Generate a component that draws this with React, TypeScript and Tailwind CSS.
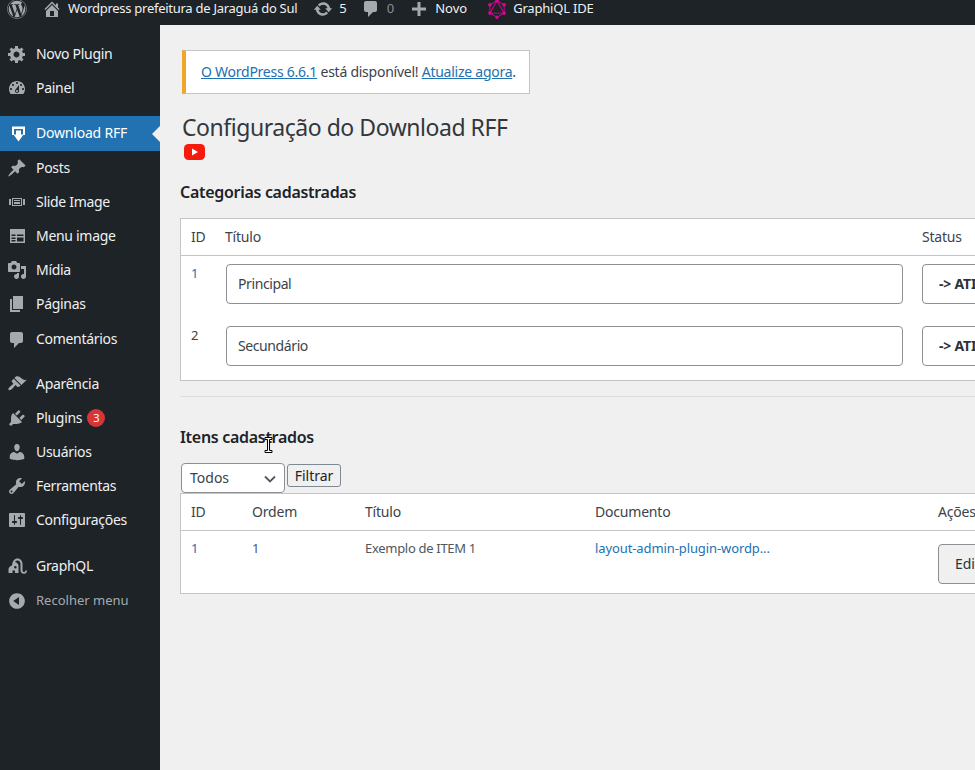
import { FaWordpress } from "react-icons/fa";
import { SiGraphql } from "react-icons/si";

const paths = {
  gear: "M18 12h-2.18c-.17.7-.44 1.35-.81 1.93l1.54 1.54-2.1 2.1-1.54-1.54c-.58.36-1.23.63-1.91.79V19H8v-2.18c-.68-.16-1.33-.43-1.91-.79l-1.54 1.54-2.12-2.12 1.54-1.54c-.36-.58-.63-1.23-.79-1.91H1V9.03h2.17c.16-.7.44-1.35.8-1.94L2.43 5.55l2.1-2.1 1.54 1.54c.58-.37 1.24-.64 1.93-.81V2h3v2.18c.68.16 1.33.43 1.91.79l1.54-1.54 2.12 2.12-1.54 1.54c.36.59.64 1.24.8 1.94H18V12zm-8.5 1.5c1.66 0 3-1.34 3-3s-1.34-3-3-3-3 1.34-3 3 1.34 3 3 3z",
  dashboard: "M3.76 16h12.48c1.1-1.37 1.76-3.11 1.76-5 0-4.42-3.58-8-8-8s-8 3.58-8 8c0 1.89.66 3.63 1.76 5zM10 4c.55 0 1 .45 1 1s-.45 1-1 1-1-.45-1-1 .45-1 1-1zM6 6c.55 0 1 .45 1 1s-.45 1-1 1-1-.45-1-1 .45-1 1-1zm8 0c.55 0 1 .45 1 1s-.45 1-1 1-1-.45-1-1 .45-1 1-1zm-5.37 5.55L12 7v6c0 1.1-.9 2-2 2s-2-.9-2-2c0-.57.24-1.08.63-1.45zM4 10c.55 0 1 .45 1 1s-.45 1-1 1-1-.45-1-1 .45-1 1-1zm12 0c.55 0 1 .45 1 1s-.45 1-1 1-1-.45-1-1 .45-1 1-1zm-5 3c0-.55-.45-1-1-1s-1 .45-1 1 .45 1 1 1 1-.45 1-1z",
  pin: "M10.44 3.02l1.82-1.82 6.36 6.35-1.83 1.82c-1.05-.68-2.48-.57-3.41.36l-.75.75c-.92.93-1.04 2.35-.35 3.41l-1.83 1.82-2.41-2.41-2.8 2.79c-.42.42-3.38 2.71-3.8 2.29s1.86-3.39 2.28-3.81l2.79-2.79L4.1 9.36l1.83-1.82c1.05.69 2.48.57 3.4-.36l.75-.75c.93-.92 1.05-2.35.36-3.41z",
  slides: "M5 14V6h10v8H5zm-3-1V7h2v6H2zm4-6v6h8V7H6zm10 0h2v6h-2V7zm-3 2V8H7v1h6zm0 3v-2H7v2h6z",
  table: "M3 3h15v14H3zM4.500 8.500v1.500h4V8.500zM10 8.500v1.500h6.500V8.500zM4.500 11.500v1.500h4v-1.500zM10 11.500v4h6.500v-4zM4.500 14v1.500h4V14z",
  media: "M13 11V4c0-.55-.45-1-1-1h-1.67L9 1H5L3.67 3H2c-.55 0-1 .45-1 1v7c0 .55.45 1 1 1h10c.55 0 1-.45 1-1zM7 4.5c1.38 0 2.5 1.12 2.5 2.5S8.38 9.5 7 9.5 4.5 8.38 4.5 7 5.62 4.5 7 4.5zM14 6h5v10.5c0 1.38-1.12 2.5-2.5 2.5S14 17.88 14 16.5s1.12-2.5 2.5-2.5c.17 0 .34.02.5.05V9h-3V6zm-4 8.05V13h2v3.5c0 1.38-1.12 2.5-2.5 2.5S7 17.88 7 16.5 8.12 14 9.5 14c.17 0 .34.02.5.05z",
  page: "M6 15V2h10v13H6zm-1 1h8v2H3V5h2v11z",
  comment: "M5 2h9c1.1 0 2 .9 2 2v7c0 1.1-.9 2-2 2h-2l-5 5v-5H5c-1.1 0-2-.9-2-2V4c0-1.1.9-2 2-2z",
  brush: "M14.48 11.06L7.41 3.99l1.5-1.5c.5-.56 2.3-.47 3.51.32 1.21.8 1.43 1.28 2.91 2.1 1.18.64 2.45 1.26 4.45.85zm-.71.71L6.7 4.7 4.93 6.47c-.39.39-.39 1.02 0 1.41l1.06 1.06c.39.39.39 1.03 0 1.42-.6.6-1.43 1.11-2.21 1.69-.35.26-.7.53-1.01.84C1.43 13.71.96 15.12 1.75 15.89c.8.79 2.2.32 3.56-1.03.31-.31.58-.66.84-1.01.58-.78 1.09-1.61 1.69-2.21.39-.39 1.03-.39 1.42 0l1.06 1.06c.39.39 1.02.39 1.41 0z",
  plugin: "M13.11 4.36L9.87 7.6 8 5.73l3.24-3.24c.35-.34 1.05-.2 1.56.32.52.51.66 1.21.31 1.55zm-8 1.77l.91-1.12 9.01 9.01-1.19.84c-.71.71-2.63 1.16-3.82 1.16H6.14L4.9 17.26c-.59.59-1.54.59-2.12 0-.59-.58-.59-1.53 0-2.12l1.24-1.24v-3.88c0-1.13.4-3.19 1.09-3.89zm7.26 3.97l3.24-3.24c.34-.35 1.04-.21 1.55.31.52.51.66 1.21.31 1.55l-3.24 3.25z",
  user: "M10 9.25c-2.27 0-2.73-3.44-2.73-3.44C7 4.02 7.82 2 9.97 2c2.16 0 2.98 2.02 2.71 3.81 0 0-.41 3.44-2.68 3.44zm0 2.57L12.72 10c2.39 0 4.52 2.33 4.52 4.53v2.49s-3.65 1.13-7.24 1.13c-3.65 0-7.24-1.13-7.24-1.13v-2.49c0-2.25 1.94-4.48 4.47-4.48z",
  wrench: "M16.68 9.77c-1.34 1.34-3.3 1.67-4.95.99l-5.41 6.52c-.99.99-2.59.99-3.58 0s-.99-2.59 0-3.57l6.52-5.42c-.68-1.65-.35-3.61.99-4.95 1.28-1.28 3.12-1.62 4.72-1.06l-2.89 2.89 2.82 2.82 2.86-2.87c.53 1.58.18 3.39-1.08 4.65zM3.81 16.21c.4.39 1.04.39 1.43 0 .4-.4.4-1.04 0-1.43-.39-.4-1.03-.4-1.43 0-.39.39-.39 1.03 0 1.43z",
  settings: "M18 16V4c0-.55-.45-1-1-1H3c-.55 0-1 .45-1 1v12c0 .55.45 1 1 1h14c.55 0 1-.45 1-1zM8 11h1c.55 0 1 .45 1 1s-.45 1-1 1H8v1.5c0 .28-.22.5-.5.5s-.5-.22-.5-.5V13H6c-.55 0-1-.45-1-1s.45-1 1-1h1V5.5c0-.28.22-.5.5-.5s.5.22.5.5V11zm5-2h-1c-.55 0-1-.45-1-1s.45-1 1-1h1V5.5c0-.28.22-.5.5-.5s.5.22.5.5V7h1c.55 0 1 .45 1 1s-.45 1-1 1h-1v5.5c0 .28-.22.5-.5.5s-.5-.22-.5-.5V9z",
  collapse: "M10 2.16c4.33 0 7.84 3.51 7.84 7.84s-3.51 7.84-7.84 7.84S2.16 14.33 2.16 10 5.71 2.16 10 2.16zm2 11.72V6.12L6.18 9.97z",
  home: "M16 8.5l1.53 1.53-1.06 1.06L10 4.62l-6.47 6.47-1.06-1.06L10 2.5l4 4v-2h2v4zm-6-2.46l6 5.99V18H4v-5.97zM12 17v-5H8v5h4z",
  update: "M10.2 3.28c3.53 0 6.43 2.61 6.92 6h2.08l-3.5 4-3.5-4h2.32c-.45-1.97-2.21-3.45-4.32-3.45-1.45 0-2.73.71-3.54 1.78L4.95 5.66C6.23 4.2 8.11 3.28 10.2 3.28zm-.4 13.44c-3.52 0-6.43-2.61-6.92-6H.8l3.5-4c1.17 1.33 2.33 2.67 3.5 4H5.48c.45 1.97 2.21 3.45 4.32 3.45 1.45 0 2.73-.71 3.54-1.78l1.71 1.95c-1.28 1.46-3.15 2.38-5.25 2.38z",
  plus: "M17 8.5v3h-5.5V17h-3v-5.5H3v-3h5.5V3h3v5.5z",
  download: "M5 2.500h13v8.500h-2V5H7v6H5zM9 6.500h5V10.500h2.500l-5 7-5-7H9z",
  elephant: "M1.500 17V13.500C1.500 11.500 3 10 5 9.500 5.500 5 7.500 2.500 10.500 2.500 13.500 2.500 15.500 5 15.500 8V14C15.500 15.500 16.200 16 17 16 17.800 16 18.300 15.500 18.300 14.500H20C20 16.500 18.800 17.800 17 17.800 15 17.800 13.500 16.500 13.500 14V8C13.500 6 12.300 4.500 10.500 4.500 9.500 4.500 8.700 5 8 6 10 6.500 11.500 8 11.500 10V17H8V14.500H5.500V17ZM7 11.200a1.300 1.300 0 1 0 2.600 0 1.300 1.300 0 1 0-2.600 0Z",
};

function Dash({ d, className = "", evenOdd = false }: { d: string; className?: string; evenOdd?: boolean }) {
  return (
    <svg viewBox="0 0 20 20" className={`h-5 w-5 fill-current ${className}`}>
      <path d={d} fillRule={evenOdd ? "evenodd" : "nonzero"} />
    </svg>
  );
}

function Item({ d, label, children, h = "h-[34px]", evenOdd }: { d: string; label: string; children?: React.ReactNode; h?: string; evenOdd?: boolean }) {
  return (
    <div className={`flex items-center ${h} pl-[7px] text-[14px] tracking-[-0.3px] text-[#f0f0f1]`}>
      <span className="flex w-[29px] shrink-0 text-[#a7aaad]"><Dash d={d} evenOdd={evenOdd} /></span>
      <span className="pb-[2px]">{label}</span>
      {children}
    </div>
  );
}

function Sidebar() {
  return (
    <aside className="w-40 shrink-0 bg-[#1d2327] pt-3">
      <Item d={paths.gear} label="Novo Plugin" />
      <Item d={paths.dashboard} label="Painel" />
      <div className="relative mt-[11px] flex h-[35px] items-center bg-[#2271b1] pl-[7px] text-[14px] tracking-[-0.2px] text-white">
        <span className="flex w-[29px] shrink-0"><Dash d={paths.download} /></span>
        <span className="pb-[2px]">Download RFF</span>
        <span className="absolute right-0 top-[10px] h-0 w-0 border-y-[8px] border-r-[8px] border-y-transparent border-r-[#f0f0f1]" />
      </div>
      <Item d={paths.pin} label="Posts" />
      <Item d={paths.slides} label="Slide Image" />
      <Item d={paths.table} label="Menu image" evenOdd />
      <Item d={paths.media} label="Mídia" />
      <Item d={paths.page} label="Páginas" />
      <Item d={paths.comment} label="Comentários" h="h-[35px] pt-[2px]" />
      <div className="h-[11px]" />
      <Item d={paths.brush} label="Aparência" />
      <Item d={paths.plugin} label="Plugins">
        <span className="ml-[5px] flex h-[18px] w-[18px] items-center justify-center rounded-full bg-[#d63638] text-[11px] text-white">3</span>
      </Item>
      <Item d={paths.user} label="Usuários" />
      <Item d={paths.wrench} label="Ferramentas" />
      <Item d={paths.settings} label="Configurações" />
      <div className="h-3" />
      <Item d={paths.elephant} label="GraphQL" evenOdd />
      <div className="flex h-[36px] items-center pl-[7px] text-[13px] text-[#a7aaad]">
        <span className="flex w-[29px] shrink-0"><Dash d={paths.collapse} /></span>
        <span>Recolher menu</span>
      </div>
    </aside>
  );
}

function TopBar() {
  return (
    <header className="flex h-[25px] shrink-0 items-center bg-[#1d2327] pb-[7px] text-[13px] text-[#f0f0f1]">
      <FaWordpress className="ml-[7px] h-5 w-5 text-[#a7aaad]" />
      <Dash d={paths.home} className="ml-[15px] text-[#a7aaad]" />
      <span className="ml-[6px] tracking-[-0.27px]">Wordpress prefeitura de Jaraguá do Sul</span>
      <Dash d={paths.update} className="ml-[16px] text-[#a7aaad]" />
      <span className="ml-[6px]">5</span>
      <Dash d={paths.comment} className="ml-[14px] text-[#a7aaad]" />
      <span className="ml-[6px] text-[#8c8f94]">0</span>
      <Dash d={paths.plus} className="ml-[15px] text-[#a7aaad]" />
      <span className="ml-[6px]">Novo</span>
      <SiGraphql className="ml-[20px] h-5 w-5 text-[#e10098]" />
      <span className="ml-[6px] tracking-[-0.2px]">GraphiQL IDE</span>
    </header>
  );
}

function YoutubeIcon() {
  return (
    <svg viewBox="0 0 21 16" className="block h-4 w-[21px]">
      <rect width="21" height="16" rx="4.500" fill="#f61c0d" />
      <path d="M8 4.500v7l6-3.500z" fill="#fff" />
    </svg>
  );
}

function CategoriesTable() {
  const inputClass = "flex h-10 w-[677px] items-center rounded border border-[#8c8f94] bg-white px-[11px] pb-[2px] text-[14px] tracking-[-0.4px] text-[#3c434a]";
  const statusClass = "ml-[19px] flex h-10 w-[140px] items-center rounded border border-[#8c8f94] bg-white px-[16px] pb-[2px] text-[14px] font-bold whitespace-nowrap text-[#2c3338]";
  return (
    <div className="mt-[14px] w-[900px] border border-[#c3c4c7] bg-white text-[14px] tracking-[-0.2px] text-[#3c434a]">
      <div className="flex h-[37px] items-center border-b border-[#c3c4c7] pb-[2px]">
        <span className="ml-[10px] w-[34px]">ID</span>
        <span className="w-[697px]">Título</span>
        <span>Status</span>
      </div>
      <div className="flex h-[62px] pt-2">
        <a className="ml-[10px] w-[35px] text-[13px] leading-[18px] text-[#2271b1]">1</a>
        <div className={inputClass}>Principal</div>
        <div className={statusClass}>-&gt; ATIVAR</div>
      </div>
      <div className="flex h-[62px] pt-2">
        <span className="ml-[10px] w-[35px] text-[13px] leading-[18px]">2</span>
        <div className={inputClass}>Secundário</div>
        <div className={statusClass}>-&gt; ATIVAR</div>
      </div>
    </div>
  );
}

function ItemsTable() {
  return (
    <div className="w-[900px] border border-[#c3c4c7] bg-white text-[14px] tracking-[-0.2px] text-[#3c434a]">
      <div className="flex h-[37px] items-center border-b border-[#c3c4c7] pb-[2px]">
        <span className="ml-[10px] w-[61px]">ID</span>
        <span className="w-[113px]">Ordem</span>
        <span className="w-[230px]">Título</span>
        <span className="w-[343px]">Documento</span>
        <span>Ações</span>
      </div>
      <div className="flex h-[62px] pt-[8px] text-[13px] tracking-[-0.1px] text-[#50575e]">
        <a className="ml-[10px] w-[61px] text-[#2271b1]">1</a>
        <span className="w-[113px]">1</span>
        <span className="w-[230px] tracking-[-0.3px]">Exemplo de ITEM 1</span>
        <a className="w-[343px] text-[#2271b1]">layout-admin-plugin-wordp...</a>
        <button className="mt-[5px] h-10 w-[90px] rounded border border-[#8c8f94] bg-[#f0f0f1] px-[16px] pb-[2px] text-left text-[14px] text-[#2c3338]">Editar</button>
      </div>
    </div>
  );
}

export default function App() {
  return (
    <div className="relative flex h-[770px] w-[975px] flex-col overflow-hidden bg-[#f0f0f1] font-['Noto_Sans',sans-serif]">
      <TopBar />
      <div className="flex min-h-0 flex-1">
        <Sidebar />
        <main className="min-w-0 flex-1 pl-5 pt-[25px]">
          <div className="ml-[2px] flex h-11 w-[348px] items-center border border-l-4 border-[#c3c4c7] border-l-[#f0a52b] bg-white pb-[2px] pl-[15px] text-[14px] tracking-[-0.25px] text-[#3c434a]">
            <span>
              <a className="text-[#2271b1] underline">O WordPress 6.6.1</a> está disponível!{" "}
              <a className="text-[#2271b1] underline">Atualize agora</a>.
            </span>
          </div>
          <h1 className="ml-[2px] mt-[18px] text-[23px] leading-[30px] tracking-[-0.46px] text-[#32373c]">Configuração do Download RFF</h1>
          <div className="ml-[4px] mt-[2px]"><YoutubeIcon /></div>
          <h2 className="mt-[20px] text-[16px] leading-[24px] font-semibold tracking-[-0.3px] text-[#1d2327]">Categorias cadastradas</h2>
          <CategoriesTable />
          <hr className="mt-[15px] border-[#dcdcde]" />
          <h2 className="mt-[28px] text-[16px] leading-[24px] font-semibold tracking-[-0.3px] text-[#1d2327]">Itens cadastrados</h2>
          <div className="ml-[1px] mt-[14px] flex items-start gap-[2px]">
            <div className="relative flex h-[30px] w-[104px] items-center rounded border border-[#8c8f94] bg-white pb-[2px] pl-2 text-[14px] text-[#3c434a]">
              Todos
              <svg viewBox="0 0 12 8" className="absolute right-[8px] top-[11px] h-2 w-3" fill="none" stroke="#50575e" strokeWidth="1.800">
                <path d="M1 1.500l5 5 5-5" />
              </svg>
            </div>
            <button className="mt-[1px] h-[23px] w-[54px] rounded-[3px] border border-[#7e8993] bg-[#f0f0f1] text-[14px] text-[#1d2327]">Filtrar</button>
          </div>
          <ItemsTable />
        </main>
      </div>
      <svg viewBox="0 0 9 16" className="absolute left-[264px] top-[437px] h-4 w-[9px]" fill="#fff" stroke="#000" strokeWidth="1">
        <path d="M1 .500h7v2H5.500v11H8v2H1v-2h2.500v-11H1z" />
      </svg>
    </div>
  );
}
